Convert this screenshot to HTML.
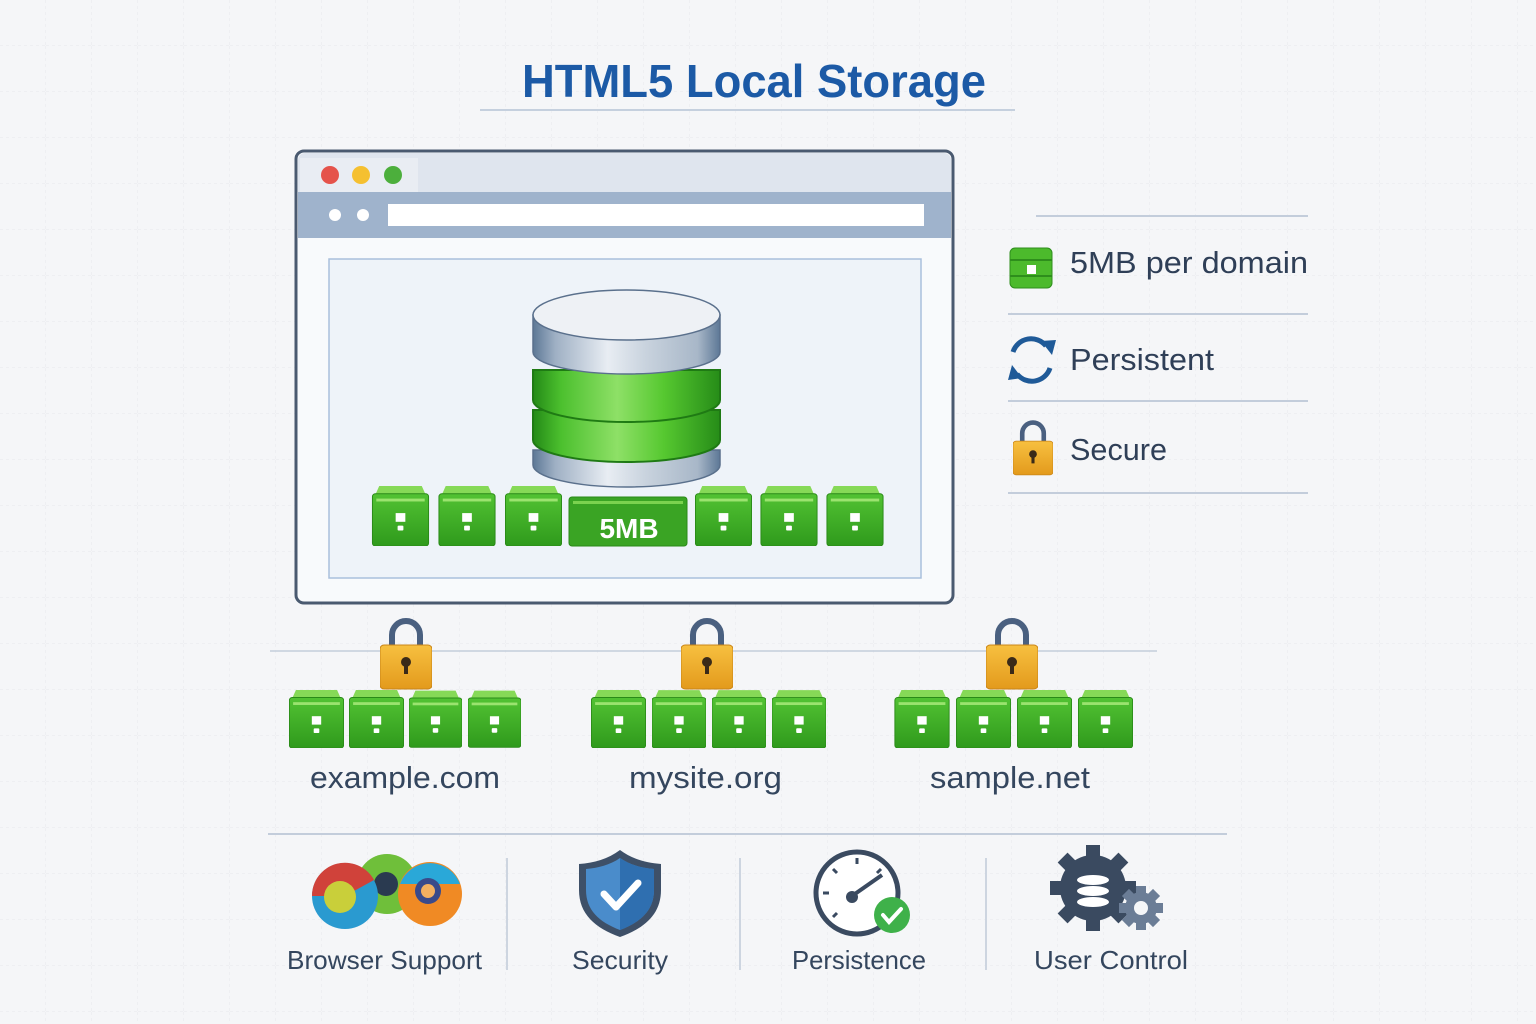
<!DOCTYPE html>
<html><head><meta charset="utf-8"><style>
html,body{margin:0;padding:0;background:#f5f6f8;}
svg{display:block}
text{font-family:"Liberation Sans","DejaVu Sans",sans-serif;}
</style></head><body>
<svg width="1536" height="1024" viewBox="0 0 1536 1024" xmlns="http://www.w3.org/2000/svg">
<defs>
<pattern id="grid" width="46" height="46" patternUnits="userSpaceOnUse">
<path d="M46 0V46M0 46H46" stroke="#e6e8ec" stroke-width="1" stroke-dasharray="3 3" fill="none"/>
</pattern>
<linearGradient id="gfront" x1="0" y1="0" x2="0" y2="1"><stop offset="0" stop-color="#52c233"/><stop offset="1" stop-color="#2f9a1c"/></linearGradient>
<linearGradient id="silver" x1="0" y1="0" x2="1" y2="0"><stop offset="0" stop-color="#5d7896"/><stop offset="0.12" stop-color="#9fb0c4"/><stop offset="0.4" stop-color="#e8edf3"/><stop offset="0.6" stop-color="#c9d3de"/><stop offset="0.88" stop-color="#a8b7c8"/><stop offset="1" stop-color="#5d7896"/></linearGradient>
<linearGradient id="greenb" x1="0" y1="0" x2="1" y2="0"><stop offset="0" stop-color="#248a17"/><stop offset="0.15" stop-color="#4cc02e"/><stop offset="0.45" stop-color="#8ee067"/><stop offset="0.7" stop-color="#56c830"/><stop offset="1" stop-color="#268c18"/></linearGradient>
<linearGradient id="gold" x1="0" y1="0" x2="0" y2="1"><stop offset="0" stop-color="#f7c040"/><stop offset="1" stop-color="#e39a1c"/></linearGradient>
<symbol id="box" viewBox="0 0 58 62">
<polygon points="3,9 7,0 51,0 55,9" fill="#86d957"/>
<rect x="0" y="8" width="58" height="54" rx="3" fill="url(#gfront)" stroke="#2a8a18" stroke-width="1"/>
<rect x="4" y="13" width="50" height="3" fill="#9be36f"/>
<rect x="24" y="28" width="10" height="9" fill="#fff"/>
<rect x="26" y="41" width="6" height="5" rx="1" fill="#fff"/>
</symbol>
<symbol id="lock" viewBox="0 0 52 72">
<path d="M12 30V17a14 14 0 0 1 28 0V30" fill="none" stroke="#4a6080" stroke-width="6"/>
<rect x="0" y="27" width="52" height="44" rx="4" fill="url(#gold)" stroke="#c98518" stroke-width="1"/>
<circle cx="26" cy="44" r="5" fill="#3a2a18"/>
<rect x="24" y="45" width="4" height="11" fill="#3a2a18"/>
</symbol>
</defs>
<rect width="1536" height="1024" fill="url(#grid)"/>

<text x="522" y="97" font-size="46" font-weight="bold" fill="#1c5aa6" textLength="464" lengthAdjust="spacingAndGlyphs">HTML5 Local Storage</text>
<line x1="480" y1="110" x2="1015" y2="110" stroke="#c5d0de" stroke-width="2"/>

<rect x="296" y="151" width="657" height="452" rx="8" fill="#f8fafc" stroke="#4a5a70" stroke-width="3"/>
<path d="M298 192V160a7 7 0 0 1 7-7H944a7 7 0 0 1 7 7V192Z" fill="#dfe5ee"/>
<rect x="300" y="158" width="118" height="34" fill="#e9edf3"/>
<rect x="298" y="192" width="653" height="46" fill="#9fb3cc"/>
<rect x="388" y="204" width="536" height="22" fill="#fff"/>
<circle cx="335" cy="215" r="6" fill="#fff"/><circle cx="363" cy="215" r="6" fill="#fff"/>
<circle cx="330" cy="175" r="9" fill="#e5534b"/><circle cx="361" cy="175" r="9" fill="#f5c030"/><circle cx="393" cy="175" r="9" fill="#4caf3c"/>
<rect x="329" y="259" width="592" height="319" fill="#eef3f9" stroke="#a9c0dc" stroke-width="1.5"/>

<path d="M533 450V465a93.5 22 0 0 0 187 0V450Z" fill="url(#silver)" stroke="#5a708c" stroke-width="1.5"/>
<path d="M533 410V440a93.5 22 0 0 0 187 0V410Z" fill="url(#greenb)" stroke="#1f7a14" stroke-width="2"/>
<path d="M533 370V400a93.5 22 0 0 0 187 0V370Z" fill="url(#greenb)" stroke="#1f7a14" stroke-width="2"/>
<path d="M533 315V352a93.5 22 0 0 0 187 0V315Z" fill="url(#silver)" stroke="#5a708c" stroke-width="1.5"/>
<ellipse cx="626.5" cy="315" rx="93.5" ry="25" fill="#eef1f5" stroke="#5a708c" stroke-width="1.5"/>

<use href="#box" x="371" y="486" width="59" height="60"/>
<use href="#box" x="437" y="486" width="60" height="60"/>
<use href="#box" x="505" y="486" width="57" height="60"/>
<use href="#box" x="695" y="486" width="57" height="60"/>
<use href="#box" x="760" y="486" width="58" height="60"/>
<use href="#box" x="826" y="486" width="58" height="60"/>
<rect x="569" y="497" width="118" height="49" rx="3" fill="#3aa424" stroke="#2a8a18"/>
<rect x="573" y="501" width="110" height="3" fill="#7bd24f"/>
<text x="629" y="538" text-anchor="middle" font-size="28" font-weight="bold" fill="#fff">5MB</text>

<g stroke="#c3cddb" stroke-width="2">
<line x1="1036" y1="216" x2="1308" y2="216"/><line x1="1008" y1="314" x2="1308" y2="314"/>
<line x1="1008" y1="401" x2="1308" y2="401"/><line x1="1008" y1="493" x2="1308" y2="493"/>
</g>
<g>
<rect x="1010" y="248" width="42" height="40" rx="5" fill="#4cba2c" stroke="#2e8e1c"/>
<line x1="1010" y1="260" x2="1052" y2="260" stroke="#2e8e1c" stroke-width="2"/>
<line x1="1010" y1="276" x2="1052" y2="276" stroke="#2e8e1c" stroke-width="2"/>
<rect x="1027" y="265" width="9" height="9" fill="#fff"/>
</g>
<text x="1070" y="273" font-size="31" fill="#2f3f57" textLength="238" lengthAdjust="spacingAndGlyphs">5MB per domain</text>
<g fill="none" stroke="#1f5a98" stroke-width="5">
<path d="M1013 352a19 19 0 0 1 33-6"/><path d="M1050 368a19 19 0 0 1-33 6"/>
</g>
<polygon points="1041,341 1056,340 1052,355" fill="#1f5a98"/>
<polygon points="1022,378 1008,380 1012,365" fill="#1f5a98"/>
<text x="1070" y="370" font-size="31" fill="#2f3f57" textLength="144" lengthAdjust="spacingAndGlyphs">Persistent</text>
<use href="#lock" x="1013" y="420" width="40" height="56"/>
<text x="1070" y="460" font-size="31" fill="#2f3f57" textLength="97" lengthAdjust="spacingAndGlyphs">Secure</text>

<line x1="270" y1="651" x2="1157" y2="651" stroke="#c3cddb" stroke-width="1.5"/>
<use href="#lock" x="380" y="618" width="52" height="72"/>
<use href="#lock" x="681" y="618" width="52" height="72"/>
<use href="#lock" x="986" y="618" width="52" height="72"/>
<use href="#box" x="289" y="690" width="55" height="58"/><use href="#box" x="349" y="690" width="55" height="58"/><use href="#box" x="409" y="690" width="53" height="58"/><use href="#box" x="468" y="690" width="53" height="58"/>
<use href="#box" x="591" y="690" width="55" height="58"/><use href="#box" x="652" y="690" width="54" height="58"/><use href="#box" x="712" y="690" width="54" height="58"/><use href="#box" x="772" y="690" width="54" height="58"/>
<use href="#box" x="894" y="690" width="56" height="58"/><use href="#box" x="956" y="690" width="55" height="58"/><use href="#box" x="1017" y="690" width="55" height="58"/><use href="#box" x="1078" y="690" width="55" height="58"/>
<g font-size="31" fill="#34465e">
<text x="310" y="788" textLength="190" lengthAdjust="spacingAndGlyphs">example.com</text>
<text x="629" y="788" textLength="153" lengthAdjust="spacingAndGlyphs">mysite.org</text>
<text x="930" y="788" textLength="160" lengthAdjust="spacingAndGlyphs">sample.net</text>
</g>

<line x1="268" y1="834" x2="1227" y2="834" stroke="#c3cddb" stroke-width="2"/>
<g stroke="#cdd5e0" stroke-width="2"><line x1="507" y1="858" x2="507" y2="970"/><line x1="740" y1="858" x2="740" y2="970"/><line x1="986" y1="858" x2="986" y2="970"/></g>
<circle cx="387" cy="884" r="30" fill="#6fbf3a"/>
<circle cx="386" cy="884" r="12" fill="#2a3a50"/>
<circle cx="345" cy="896" r="33" fill="#2a9ad0"/>
<path d="M312 896a33 33 0 0 1 62-16L345 896Z" fill="#d0423a"/>
<circle cx="340" cy="897" r="16" fill="#c9cf3a"/>
<circle cx="430" cy="894" r="32" fill="#f08a24"/>
<path d="M400 884a32 32 0 0 1 60 0Z" fill="#2aa8d8"/>
<circle cx="428" cy="891" r="13" fill="#3a4a8a"/><circle cx="428" cy="891" r="7" fill="#f4b060"/>
<path d="M620 850c12 9 26 13 41 14v26c0 24-16 38-41 47c-25-9-41-23-41-47v-26c15-1 29-5 41-14Z" fill="#3e5068"/>
<path d="M620 858c10 7 22 10 34 11v21c0 20-13 32-34 40c-21-8-34-20-34-40v-21c12-1 24-4 34-11Z" fill="#4a8ccb"/>
<path d="M620 858v72c21-8 34-20 34-40v-21c-12-1-24-4-34-11Z" fill="#2f6fb0"/>
<path d="M604 894l12 13l22-24" fill="none" stroke="#fff" stroke-width="7" stroke-linecap="round" stroke-linejoin="round"/>
<circle cx="857" cy="893" r="41" fill="#fff" stroke="#3a4a60" stroke-width="5"/>
<g stroke="#3a4a60" stroke-width="3"><line x1="857" y1="858" x2="857" y2="864"/><line x1="823" y1="893" x2="829" y2="893"/><line x1="833" y1="869" x2="837" y2="873"/><line x1="881" y1="869" x2="877" y2="873"/><line x1="833" y1="917" x2="837" y2="913"/></g>
<line x1="852" y1="896" x2="882" y2="875" stroke="#3a4a60" stroke-width="4"/>
<circle cx="852" cy="897" r="6" fill="#3a4a60"/>
<circle cx="892" cy="915" r="18" fill="#3fb14a"/>
<path d="M883 915l6 7l12-13" fill="none" stroke="#fff" stroke-width="4" stroke-linecap="round"/>
<g transform="translate(1093,888)">
<g fill="#3a4a60"><circle r="33"/>
<rect x="-7" y="-43" width="14" height="86"/><rect x="-43" y="-7" width="86" height="14"/>
<rect x="-7" y="-43" width="14" height="86" transform="rotate(45)"/><rect x="-7" y="-43" width="14" height="86" transform="rotate(-45)"/></g>
<ellipse cx="0" cy="-8" rx="16" ry="5" fill="#fff"/><ellipse cx="0" cy="3" rx="16" ry="5" fill="#fff"/><ellipse cx="0" cy="14" rx="16" ry="5" fill="#fff"/>
</g>
<g transform="translate(1141,908)" fill="#6b7d96">
<circle r="16"/><rect x="-5" y="-22" width="10" height="44"/><rect x="-22" y="-5" width="44" height="10"/>
<rect x="-5" y="-22" width="10" height="44" transform="rotate(45)"/><rect x="-5" y="-22" width="10" height="44" transform="rotate(-45)"/>
<circle r="7" fill="#f5f6f8"/></g>
<g font-size="26" fill="#34465e">
<text x="287" y="969" textLength="195" lengthAdjust="spacingAndGlyphs">Browser Support</text>
<text x="572" y="969" textLength="96" lengthAdjust="spacingAndGlyphs">Security</text>
<text x="792" y="969" textLength="134" lengthAdjust="spacingAndGlyphs">Persistence</text>
<text x="1034" y="969" textLength="154" lengthAdjust="spacingAndGlyphs">User Control</text>
</g>
</svg>
</body></html>
